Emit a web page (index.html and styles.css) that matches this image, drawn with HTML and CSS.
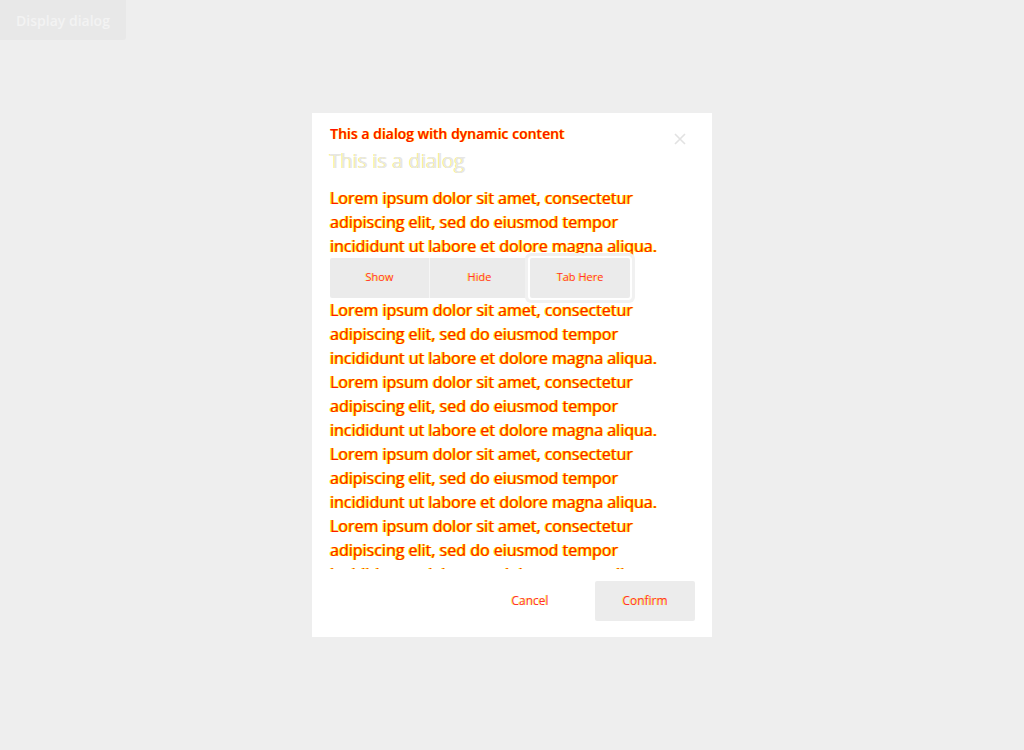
FILE: index.html
```html
<!DOCTYPE html>
<html>
<head>
<meta charset="utf-8">
<link rel="stylesheet" href="styles.css">
</head>
<body>
<button class="open-btn">Display dialog</button>
<div class="stage">
  <div class="dialog">
    <div class="dialog-head">
      <div class="titles">
        <div class="subtitle">This a dialog with dynamic content</div>
        <div class="heading">This is a dialog</div>
      </div>
      <svg class="close" width="14" height="14" viewBox="0 0 14 14"><path d="M2 2L12 12M12 2L2 12" stroke="#e2e2e2" stroke-width="1.6" fill="none"/></svg>
    </div>
    <div class="dialog-body">
      <p class="txt">Lorem ipsum dolor sit amet, consectetur adipiscing elit, sed do eiusmod tempor incididunt ut labore et dolore magna aliqua.</p>
      <div class="tabs">
        <div class="tab">Show</div>
        <div class="tab">Hide</div>
        <div class="tab focus"><span>Tab Here</span></div>
      </div>
      <p class="txt">Lorem ipsum dolor sit amet, consectetur adipiscing elit, sed do eiusmod tempor incididunt ut labore et dolore magna aliqua.</p>
      <p class="txt">Lorem ipsum dolor sit amet, consectetur adipiscing elit, sed do eiusmod tempor incididunt ut labore et dolore magna aliqua.</p>
      <p class="txt">Lorem ipsum dolor sit amet, consectetur adipiscing elit, sed do eiusmod tempor incididunt ut labore et dolore magna aliqua.</p>
      <p class="txt">Lorem ipsum dolor sit amet, consectetur adipiscing elit, sed do eiusmod tempor incididunt ut labore et dolore magna aliqua.</p>
    </div>
    <div class="dialog-foot">
      <button class="btn ghost">Cancel</button>
      <button class="btn primary">Confirm</button>
    </div>
  </div>
</div>
</body>
</html>
```
FILE: styles.css
```css
html, body {
  margin: 0;
  padding: 0;
  height: 100%;
  background: #eeeeee;
  font-family: "Open Sans", "Noto Sans", sans-serif;
}
.open-btn {
  display: block;
  border: 0;
  margin: 0;
  width: 126px;
  height: 40px;
  background: #e8e8e8;
  color: #f3f3f3;
  font-family: "Open Sans", sans-serif;
  font-size: 14px;
  font-weight: 600;
  border-radius: 0 0 3px 0;
  padding: 0;
}
.stage {
  display: flex;
  justify-content: center;
  padding-top: 73px;
}
.dialog {
  width: 400px;
  height: 524px;
  background: #fff;
  box-sizing: border-box;
  display: flex;
  flex-direction: column;
}
.dialog-head {
  display: flex;
  justify-content: space-between;
  padding: 10px 18px 0 18px;
}
.subtitle {
  font-size: 14px;
  line-height: 22px;
  font-weight: 600;
  color: #ff1000;
  text-shadow: 1px 0 0 #ffee00;
}
.heading {
  font-size: 20px;
  line-height: 30px;
  color: #e6e6e6;
  text-shadow: -1px 0 0 #f6f080;
  margin-top: 1px;
}
.close {
  margin-top: 9px;
  margin-right: 7px;
}
.dialog-body {
  margin-top: 10px;
  padding: 0 18px;
  height: 383px;
  overflow: hidden;
}
.txt {
  margin: 0;
  font-size: 16px;
  line-height: 24px;
  color: #ff1800;
  text-shadow: -1px 0 0 #ffee00, 1px 0 0 #fff200;
  width: 350px;
}
.tabs {
  display: flex;
  width: 300px;
}
.tab {
  width: 100px;
  height: 40px;
  display: flex;
  align-items: center;
  justify-content: center;
  padding-bottom: 3px;
  background: #ebebeb;
  font-size: 11px;
  color: #ff3030;
  text-shadow: -1px 0 0 #fff060;
  box-sizing: border-box;
  border-right: 1px solid #f6f6f6;
}
.tab:first-child { border-radius: 2px 0 0 2px; }
.tab.focus {
  border-right: 0;
  border-radius: 2px;
  box-shadow: 0 0 0 2px #fff, 0 0 0 5px #f1f1f1;
}
.dialog-foot {
  display: flex;
  justify-content: flex-end;
  gap: 20px;
  padding: 12px 17px 16px;
}
.btn {
  height: 40px;
  width: 100px;
  border: 0;
  border-radius: 2px;
  font-family: "Open Sans", sans-serif;
  font-size: 12px;
  color: #ff3030;
  text-shadow: -1px 0 0 #fff060;
  padding: 0 0 2px;
}
.btn.ghost { background: transparent; width: 90px; }
.btn.primary { background: #ececec; }
```
